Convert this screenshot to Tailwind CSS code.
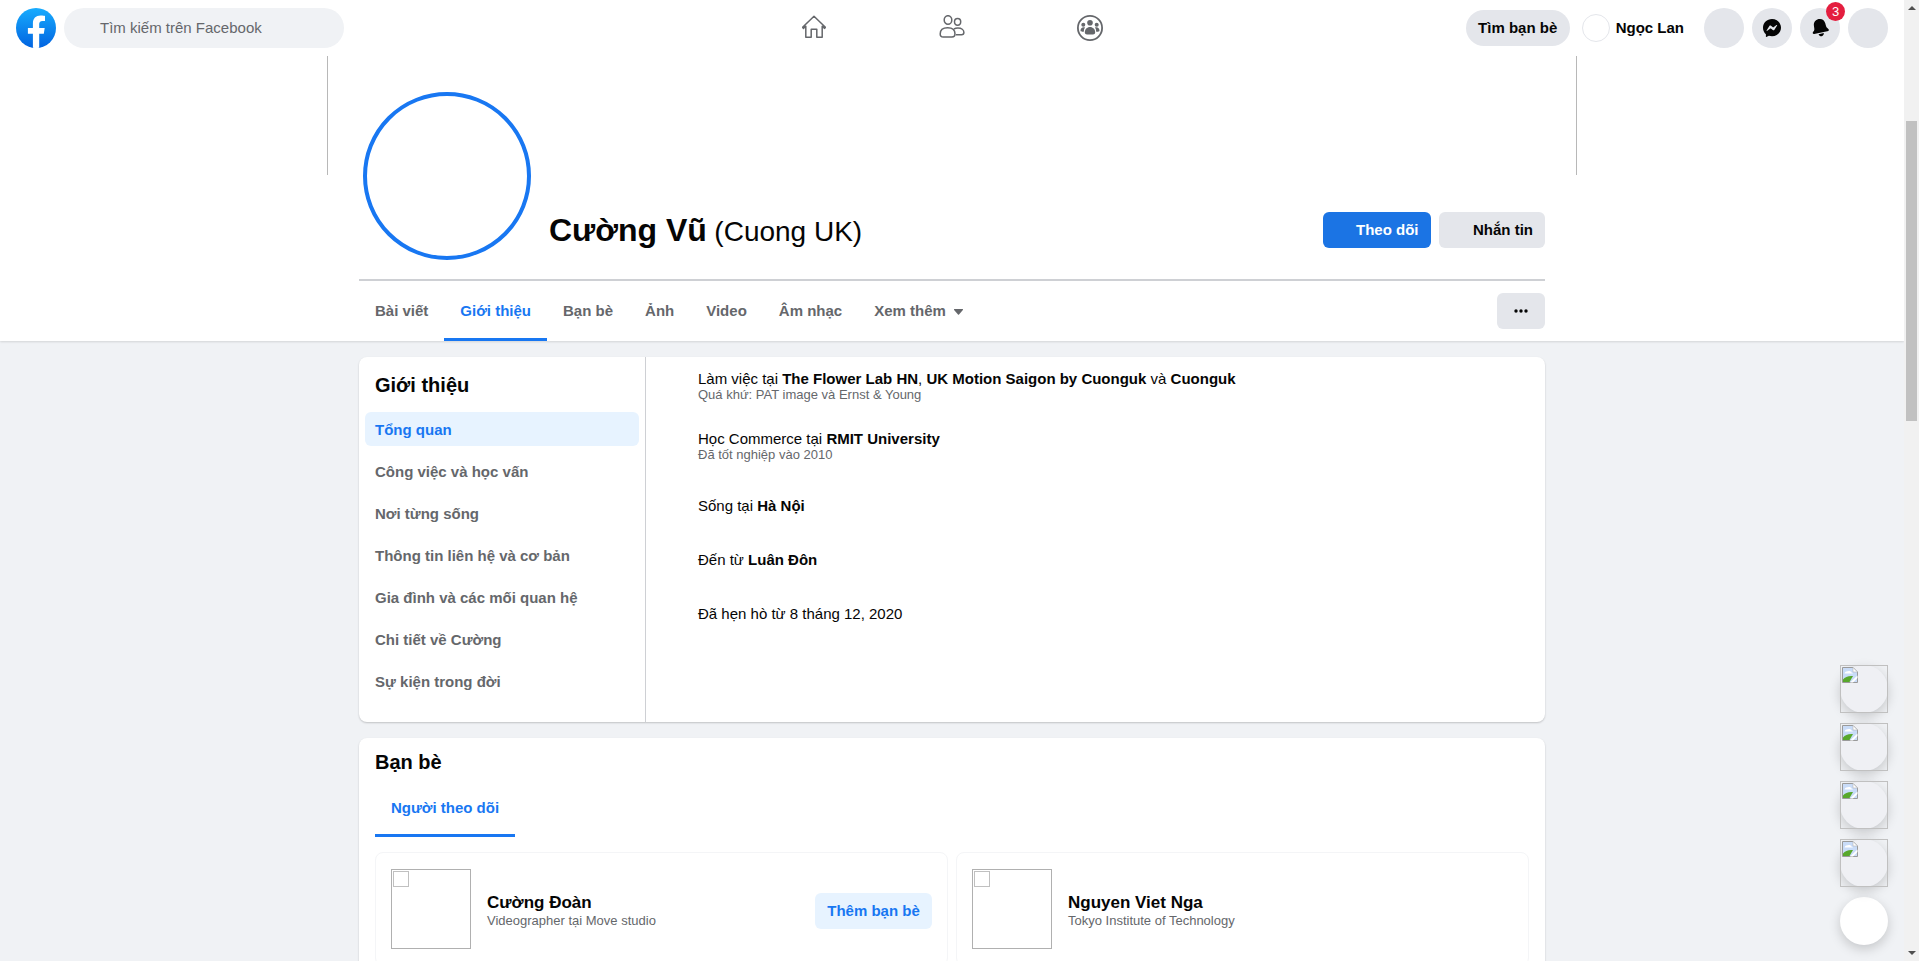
<!DOCTYPE html>
<html lang="vi">
<head>
  <meta charset="UTF-8">
  <meta name="viewport" content="width=device-width, initial-scale=1.0">
  <title>Cường Vũ | Facebook</title>
  <script src="https://cdn.jsdelivr.net/npm/@tailwindcss/browser@4"></script>
</head>
<body class="font-['Liberation_Sans',sans-serif] text-[#050505]">
<div class="flex h-[961px] w-[1919px] overflow-hidden">

  <!-- Page -->
  <div class="relative h-full w-[1904px] shrink-0 overflow-hidden bg-[#f0f2f5]">

    <!-- Top section -->
    <div class="bg-white shadow-[0_1px_2px_rgba(0,0,0,0.12)]">

      <!-- Header -->
      <header class="flex h-14 items-center bg-white">
        <div class="flex w-[745px] items-center gap-2 pl-4">
          <svg class="h-10 w-10" viewBox="0 0 40 40">
            <defs>
              <linearGradient id="fbLogo" x1="0" y1="0" x2="0" y2="1">
                <stop offset="0" stop-color="#18acfe"/>
                <stop offset="1" stop-color="#0163e0"/>
              </linearGradient>
            </defs>
            <circle cx="20" cy="20" r="20" fill="url(#fbLogo)"/>
            <path fill="#fff" d="M27.8 25.8 28.7 20h-5.5v-3.800c0-1.600.8-3.200 3.300-3.200H29V8s-2.300-.4-4.500-.4c-4.600 0-7.600 2.800-7.600 7.800V20h-5v5.800h5v14a20 20 0 0 0 6.300 0v-14z"/>
          </svg>
          <div class="flex h-10 w-[280px] items-center rounded-full bg-[#f0f2f5] pl-9 text-[15px] text-[#65676b]">Tìm kiếm trên Facebook</div>
        </div>

        <!-- Center icons -->
        <nav class="flex w-[414px]">
          <div class="flex w-[138px] justify-center">
            <svg class="h-6 w-6" viewBox="0 0 24 24" fill="none" stroke="#65676b" stroke-width="1.5" stroke-linejoin="round">
              <path d="M12 1.200 23.400 12.200 22.600 13.400 20.200 11.200V22.300H14.800V14.200H9.200V22.300H3.800V11.200L1.400 13.400.6 12.200Z"/>
            </svg>
          </div>
          <div class="flex w-[138px] justify-center">
            <svg class="h-6 w-[26px]" viewBox="0 0 26 24" fill="none" stroke="#65676b" stroke-width="1.5">
              <ellipse cx="9" cy="5" rx="3.800" ry="4.300"/>
              <ellipse cx="18.600" cy="6.800" rx="3.100" ry="3.400"/>
              <path d="M1.200 19c0-4 3-6.200 7.400-6.200s7.400 2.200 7.400 6.200c0 1.900-1.200 3-3 3H4.200c-1.800 0-3-1.100-3-3Z"/>
              <path d="M15 14c1-.6 2.400-.9 3.900-.9 3.600 0 6 1.900 6 4.400 0 1.400-.9 2.200-2.300 2.200H17"/>
            </svg>
          </div>
          <div class="flex w-[138px] justify-center">
            <svg class="h-[26px] w-[26px]" viewBox="0 0 26 26">
              <circle cx="13" cy="13" r="12.100" fill="none" stroke="#65676b" stroke-width="1.800"/>
              <g fill="#65676b">
                <circle cx="13" cy="7.800" r="2.800"/>
                <circle cx="6.300" cy="9.800" r="2"/>
                <circle cx="19.700" cy="9.800" r="2"/>
                <path d="M7.800 17.500c0-3.400 2.200-5.600 5.200-5.600s5.200 2.200 5.200 5.600c0 1.300-1 2-2.200 2H10c-1.200 0-2.200-.7-2.200-2Z"/>
                <path d="M3.500 15.500c0-1.700 1.300-3.200 3.200-3.200.5 0 .9.100 1.300.3-.8 1.100-1.200 2.500-1.200 4.100H5.200c-1 0-1.700-.4-1.700-1.200Z"/>
                <path d="M22.500 15.500c0-1.700-1.300-3.200-3.200-3.200-.5 0-.9.100-1.300.3.800 1.100 1.200 2.500 1.200 4.100h1.600c1 0 1.700-.4 1.700-1.200Z"/>
              </g>
            </svg>
          </div>
        </nav>

        <!-- Right side -->
        <div class="flex flex-1 items-center justify-end pr-4">
          <div class="flex h-9 w-[104px] items-center justify-center rounded-full bg-[#e4e6eb] text-[15px] font-bold">Tìm bạn bè</div>
          <div class="ml-3 h-7 w-7 rounded-full border border-[#e4e6eb] bg-white"></div>
          <div class="ml-[6px] mr-5 text-[15px] font-bold">Ngọc Lan</div>
          <div class="flex gap-2">
            <div class="h-10 w-10 rounded-full bg-[#e4e6eb]"></div>
            <div class="flex h-10 w-10 items-center justify-center rounded-full bg-[#e4e6eb]">
              <svg class="h-[18px] w-[18px]" viewBox="0 0 18 18">
                <path fill="#050505" d="M9 0C4 0 0 3.700 0 8.700c0 2.600 1.100 4.900 2.900 6.500v2.500c0 .2.200.3.400.2l2.600-1.100c1 .3 2 .4 3.100.4 5 0 9-3.700 9-8.500S14 0 9 0Z"/>
                <path fill="#e4e6eb" d="M3.700 11.200 6.500 6.800c.3-.4.800-.5 1.200-.2l2.200 1.700c.2.100.4.100.6 0l3-2.300c.4-.3.900.2.600.6l-2.800 4.400c-.3.400-.8.500-1.200.2L7.900 9.500c-.2-.1-.4-.1-.6 0l-3 2.300c-.4.300-.9-.2-.6-.6Z"/>
              </svg>
            </div>
            <div class="relative flex h-10 w-10 items-center justify-center rounded-full bg-[#e4e6eb]">
              <svg class="h-[18px] w-[18px] -rotate-12" viewBox="0 0 18 18">
                <path fill="#050505" d="M9.500 0C6 0 3.700 2.500 3.500 5.800L3.300 8.500C3.200 9.800 2.500 10.500 1.500 11.300.6 12 .5 13.500 2 13.700H15.500C17.300 13.700 17.800 12.500 16.800 11.300 15.800 10.300 15.400 9.500 15.300 8L15.100 5.200C14.900 2.200 12.800 0 9.500 0Z"/>
                <path fill="#050505" d="M6.300 14.800h5.400c-.3 1.600-1.400 2.700-2.700 2.700s-2.400-1.100-2.700-2.700Z"/>
              </svg>
              <div class="absolute left-[26px] top-[-6px] flex h-[19px] w-[19px] items-center justify-center rounded-full bg-[#e41e3f] text-[13px] text-white">3</div>
            </div>
            <div class="h-10 w-10 rounded-full bg-[#e4e6eb]"></div>
          </div>
        </div>
      </header>

      <!-- Cover -->
      <div class="mx-auto h-[119px] w-[1250px] border-x border-[#b8b8b8]"></div>

      <!-- Profile head -->
      <div class="mx-auto -mt-[83px] flex h-[189px] w-[1186px] border-b-2 border-[#ced0d4]">
        <div class="relative ml-1 h-[168px] w-[168px] rounded-full border-4 border-[#1877f2] bg-white"></div>
        <div class="ml-[18px] mt-[118px] flex-1 whitespace-nowrap leading-[40px]">
          <span class="text-[32px] font-bold">Cường Vũ</span>
          <span class="ml-[3px] text-[28px]">(Cuong UK)</span>
        </div>
        <div class="mt-[120px] flex gap-2">
          <div class="flex h-9 w-[108px] items-center rounded-md bg-[#1b74e4] pl-[33px] text-[15px] font-bold text-white">Theo dõi</div>
          <div class="flex h-9 w-[106px] items-center rounded-md bg-[#e4e6eb] pl-[34px] text-[15px] font-bold">Nhắn tin</div>
        </div>
      </div>

      <!-- Tabs -->
      <div class="mx-auto flex h-[60px] w-[1186px] items-start justify-between">
        <nav class="flex h-[60px] text-[15px] font-bold text-[#65676b]">
          <div class="flex items-center px-4 pt-px">Bài viết</div>
          <div class="flex items-center border-b-[3px] border-t-[3px] border-b-[#1877f2] border-t-transparent px-4 pt-px text-[#1877f2]">Giới thiệu</div>
          <div class="flex items-center px-4 pt-px">Bạn bè</div>
          <div class="flex items-center px-4 pt-px">Ảnh</div>
          <div class="flex items-center px-4 pt-px">Video</div>
          <div class="flex items-center px-4 pt-px">Âm nhạc</div>
          <div class="flex items-center px-4 pt-px">
            Xem thêm
            <svg class="ml-2 h-[6px] w-[9px]" viewBox="0 0 9 6"><path fill="#65676b" d="M.6 0h7.800c.5 0 .8.500.5.900L5 5.600c-.3.300-.7.300-1 0L.1.900C-.2.500.1 0 .6 0Z"/></svg>
          </div>
        </nav>
        <div class="mt-3 flex h-9 w-12 items-center justify-center rounded-md bg-[#e4e6eb]">
          <svg class="h-1 w-[14px]" viewBox="0 0 14 4" fill="#050505">
            <circle cx="2" cy="2" r="1.700"/>
            <circle cx="7" cy="2" r="1.700"/>
            <circle cx="12" cy="2" r="1.700"/>
          </svg>
        </div>
      </div>
    </div>

    <!-- Main -->
    <main class="mx-auto flex w-[1186px] flex-col gap-4 pt-4">

      <!-- About card -->
      <section class="flex h-[365px] rounded-lg bg-white shadow-[0_1px_2px_rgba(0,0,0,0.2)]">
        <div class="w-[287px] border-r border-[#ced0d4]">
          <h2 class="pl-4 pt-4 text-[20px] font-bold leading-6">Giới thiệu</h2>
          <ul class="mt-[15px] flex flex-col gap-2 px-[6px] text-[15px] font-bold text-[#65676b]">
            <li class="flex h-[34px] items-center rounded-md bg-[#e7f3ff] pl-[10px] pt-[2px] text-[#1877f2]">Tổng quan</li>
            <li class="flex h-[34px] items-center pl-[10px] pt-[2px]">Công việc và học vấn</li>
            <li class="flex h-[34px] items-center pl-[10px] pt-[2px]">Nơi từng sống</li>
            <li class="flex h-[34px] items-center pl-[10px] pt-[2px]">Thông tin liên hệ và cơ bản</li>
            <li class="flex h-[34px] items-center pl-[10px] pt-[2px]">Gia đình và các mối quan hệ</li>
            <li class="flex h-[34px] items-center pl-[10px] pt-[2px]">Chi tiết về Cường</li>
            <li class="flex h-[34px] items-center pl-[10px] pt-[2px]">Sự kiện trong đời</li>
          </ul>
        </div>
        <div class="flex-1 pl-[52px] pt-[13px] text-[15px] leading-[17px]">
          <div>
            <p>Làm việc tại <b>The Flower Lab HN</b>, <b>UK Motion Saigon by Cuonguk</b> và <b>Cuonguk</b></p>
            <p class="text-[13px] leading-[15px] text-[#65676b]">Quá khứ: PAT image và Ernst &amp; Young</p>
          </div>
          <div class="mt-7">
            <p>Học Commerce tại <b>RMIT University</b></p>
            <p class="text-[13px] leading-[15px] text-[#65676b]">Đã tốt nghiệp vào 2010</p>
          </div>
          <p class="mt-[35px]">Sống tại <b>Hà Nội</b></p>
          <p class="mt-[37px]">Đến từ <b>Luân Đôn</b></p>
          <p class="mt-[37px]">Đã hẹn hò từ 8 tháng 12, 2020</p>
        </div>
      </section>

      <!-- Friends card -->
      <section class="rounded-lg bg-white px-4 pb-4 pt-3 shadow-[0_1px_2px_rgba(0,0,0,0.2)]">
        <h2 class="text-[20px] font-bold leading-6">Bạn bè</h2>
        <div class="mt-2 flex h-[55px] w-[140px] items-center justify-center border-b-[3px] border-[#1877f2] text-[15px] font-bold text-[#1877f2]">Người theo dõi</div>
        <div class="mt-[15px] grid grid-cols-2 gap-2">
          <div class="flex h-[114px] items-start rounded-lg border border-[#f4f5f7] px-[15px] pt-4">
            <div class="relative h-20 w-20 shrink-0 border border-[#b0b0b0] bg-white">
              <div class="absolute left-[1px] top-[1px] h-4 w-4 border border-[#c0c0c0]"></div>
            </div>
            <div class="ml-4 mt-6 flex-1">
              <div class="text-[17px] font-bold leading-5">Cường Đoàn</div>
              <div class="text-[13px] leading-4 text-[#65676b]">Videographer tại Move studio</div>
            </div>
            <div class="mt-6 flex h-9 w-[117px] items-center justify-center rounded-md bg-[#e7f3ff] text-[15px] font-bold text-[#1877f2]">Thêm bạn bè</div>
          </div>
          <div class="flex h-[114px] items-start rounded-lg border border-[#f4f5f7] px-[15px] pt-4">
            <div class="relative h-20 w-20 shrink-0 border border-[#b0b0b0] bg-white">
              <div class="absolute left-[1px] top-[1px] h-4 w-4 border border-[#c0c0c0]"></div>
            </div>
            <div class="ml-4 mt-6 flex-1">
              <div class="text-[17px] font-bold leading-5">Nguyen Viet Nga</div>
              <div class="text-[13px] leading-4 text-[#65676b]">Tokyo Institute of Technology</div>
            </div>
          </div>
        </div>
      </section>
    </main>

    <!-- Floating contacts -->
    <div class="absolute right-4 top-[665px] flex flex-col gap-[10px]">
      <div class="relative h-12 w-12 rounded-full bg-[#eff0f4] shadow-[0_4px_12px_rgba(0,0,0,0.18)]">
        <div class="absolute inset-0 border border-[#c0c0c0]"></div>
        <svg class="absolute left-[2px] top-[2px] h-4 w-4" viewBox="0 0 16 16">
          <path fill="#c9dcf8" stroke="#9a9a9a" d="M.5.5h10.500l4.500 4.500v10.500H.5Z"/>
          <path fill="#fff" stroke="#b5b5b5" stroke-width=".6" d="M11 .5V5h4.500Z"/>
          <path fill="#fff" d="M2.500 6.500c.6-1.800 2-2.600 3.500-2.300 1.400-.7 3-.2 3.500 1.200.8.100 1.300.6 1.500 1.100Z"/>
          <path fill="#58a82c" d="M1 15V12.500C3 10 6.500 8.500 11 9L7.500 15Z"/>
          <path fill="#fff" d="M8 15.500 15.500 8.500V11L11 15.500Z"/>
        </svg>
      </div>
      <div class="relative h-12 w-12 rounded-full bg-[#eff0f4] shadow-[0_4px_12px_rgba(0,0,0,0.18)]">
        <div class="absolute inset-0 border border-[#c0c0c0]"></div>
        <svg class="absolute left-[2px] top-[2px] h-4 w-4" viewBox="0 0 16 16">
          <path fill="#c9dcf8" stroke="#9a9a9a" d="M.5.5h10.500l4.500 4.500v10.500H.5Z"/>
          <path fill="#fff" stroke="#b5b5b5" stroke-width=".6" d="M11 .5V5h4.500Z"/>
          <path fill="#fff" d="M2.500 6.500c.6-1.800 2-2.600 3.500-2.300 1.400-.7 3-.2 3.500 1.200.8.100 1.300.6 1.500 1.100Z"/>
          <path fill="#58a82c" d="M1 15V12.500C3 10 6.500 8.500 11 9L7.500 15Z"/>
          <path fill="#fff" d="M8 15.500 15.500 8.500V11L11 15.500Z"/>
        </svg>
      </div>
      <div class="relative h-12 w-12 rounded-full bg-[#eff0f4] shadow-[0_4px_12px_rgba(0,0,0,0.18)]">
        <div class="absolute inset-0 border border-[#c0c0c0]"></div>
        <svg class="absolute left-[2px] top-[2px] h-4 w-4" viewBox="0 0 16 16">
          <path fill="#c9dcf8" stroke="#9a9a9a" d="M.5.5h10.500l4.500 4.500v10.500H.5Z"/>
          <path fill="#fff" stroke="#b5b5b5" stroke-width=".6" d="M11 .5V5h4.500Z"/>
          <path fill="#fff" d="M2.500 6.500c.6-1.800 2-2.600 3.500-2.300 1.400-.7 3-.2 3.500 1.200.8.100 1.300.6 1.500 1.100Z"/>
          <path fill="#58a82c" d="M1 15V12.500C3 10 6.500 8.500 11 9L7.500 15Z"/>
          <path fill="#fff" d="M8 15.500 15.500 8.500V11L11 15.500Z"/>
        </svg>
      </div>
      <div class="relative h-12 w-12 rounded-full bg-[#eff0f4] shadow-[0_4px_12px_rgba(0,0,0,0.18)]">
        <div class="absolute inset-0 border border-[#c0c0c0]"></div>
        <svg class="absolute left-[2px] top-[2px] h-4 w-4" viewBox="0 0 16 16">
          <path fill="#c9dcf8" stroke="#9a9a9a" d="M.5.5h10.500l4.500 4.500v10.500H.5Z"/>
          <path fill="#fff" stroke="#b5b5b5" stroke-width=".6" d="M11 .5V5h4.500Z"/>
          <path fill="#fff" d="M2.500 6.500c.6-1.800 2-2.600 3.500-2.300 1.400-.7 3-.2 3.500 1.200.8.100 1.300.6 1.500 1.100Z"/>
          <path fill="#58a82c" d="M1 15V12.500C3 10 6.500 8.500 11 9L7.500 15Z"/>
          <path fill="#fff" d="M8 15.500 15.500 8.500V11L11 15.500Z"/>
        </svg>
      </div>
      <div class="h-12 w-12 rounded-full bg-white shadow-[0_4px_12px_rgba(0,0,0,0.18)]"></div>
    </div>
  </div>

  <!-- Scrollbar -->
  <div class="relative h-full w-[15px] shrink-0 bg-[#f1f1f1]">
    <svg class="absolute left-1 top-[6px] h-1 w-2" viewBox="0 0 8 4"><path fill="#505050" d="M4 0 8 4H0Z"/></svg>
    <div class="absolute left-[2px] top-[121px] h-[300px] w-[11px] bg-[#c1c1c1]"></div>
    <svg class="absolute bottom-[6px] left-1 h-1 w-2" viewBox="0 0 8 4"><path fill="#505050" d="M0 0H8L4 4Z"/></svg>
  </div>
</div>
</body>
</html>
